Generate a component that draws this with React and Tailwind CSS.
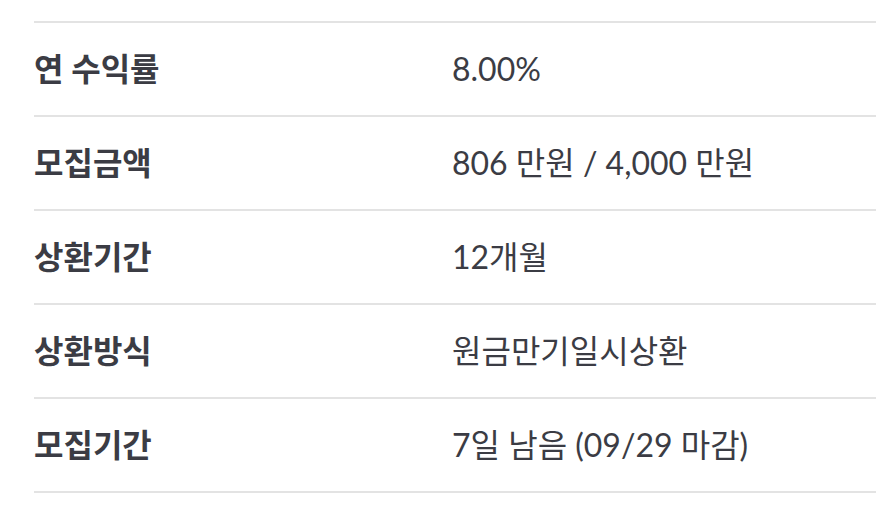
const rows = [
  { label: '연 수익률', value: '8.00%' },
  { label: '모집금액', value: '806 만원 / 4,000 만원' },
  { label: '상환기간', value: '12개월' },
  { label: '상환방식', value: '원금만기일시상환' },
  { label: '모집기간', value: '7일 남음 (09/29 마감)' },
];

export default function App() {
  return (
    <div className="w-[876px] h-[516px] bg-white pt-[21px] pl-[34px] overflow-hidden">
      <div className="border-b-2 border-[#e3e3e3]">
        {rows.map(({ label, value }) => (
          <div
            key={label}
            className="flex items-center h-[94px] border-t-2 border-[#e3e3e3] text-[#3b3c44]"
          >
            <div className="w-[418px] text-[32px] font-bold font-['Lato','Noto_Sans_CJK_KR',sans-serif]">
              {label}
            </div>
            <div className="text-[32px] font-['Lato','Noto_Sans_CJK_KR',sans-serif]">
              {value}
            </div>
          </div>
        ))}
      </div>
    </div>
  );
}
